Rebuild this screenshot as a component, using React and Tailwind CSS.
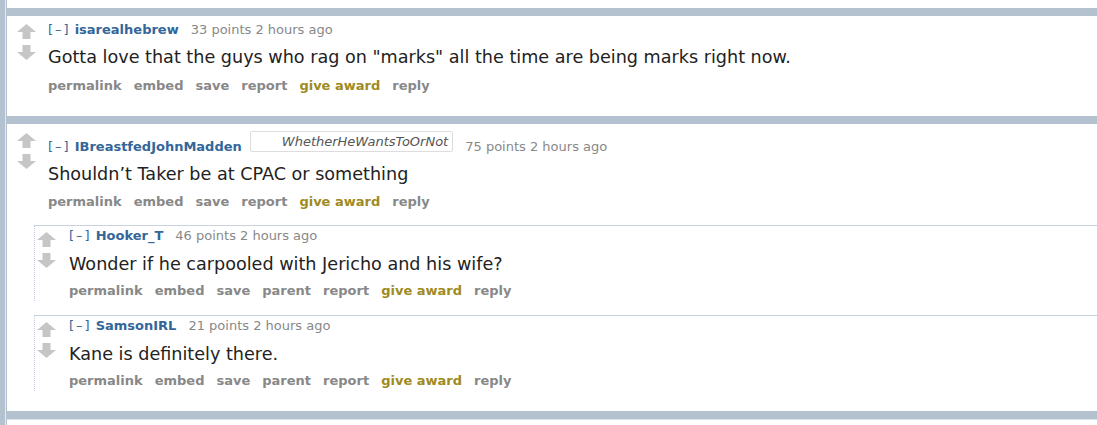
import React from 'react';

const font = { fontFamily: '"DejaVu Sans", Verdana, sans-serif' };

const UpArrow = () => (
  <svg width="19" height="15" viewBox="0 0 19 15">
    <path d="M9.5 0 L19 8 H13.5 V15 H5.5 V8 H0 Z" fill="#c6c6c6" />
  </svg>
);

const DownArrow = () => (
  <svg width="19" height="15" viewBox="0 0 19 15">
    <path d="M9.5 15 L19 7 H13.5 V0 H5.5 V7 H0 Z" fill="#c6c6c6" />
  </svg>
);

const Tagline = ({ author, points, flair }) => (
  <div className="flex items-start text-[13px] leading-[16px] whitespace-nowrap">
    <span className={`text-[#369] tracking-[2px] ${flair ? 'mt-[8px]' : ''}`}>[–]</span>
    <span className={`ml-[4px] font-bold text-[#369] ${flair ? 'mt-[8px]' : ''}`}>{author}</span>
    {flair && (
      <span className="ml-[8px] h-[21px] border border-[#dddddd] rounded-[2px] pl-[31px] pr-[4px] italic text-[#555] leading-[19px]">
        {flair}
      </span>
    )}
    <span className={`ml-[12px] text-[#888] ${flair ? 'mt-[8px]' : ''}`}>{points} points 2 hours ago</span>
  </div>
);

const Buttons = ({ parent }) => {
  const items = parent
    ? ['permalink', 'embed', 'save', 'parent', 'report', 'give award', 'reply']
    : ['permalink', 'embed', 'save', 'report', 'give award', 'reply'];
  return (
    <div className="flex gap-[12px] text-[13px] leading-[16px] font-bold whitespace-nowrap">
      {items.map((b) => (
        <span key={b} className={b === 'give award' ? 'text-[#a08a22]' : 'text-[#888]'}>{b}</span>
      ))}
    </div>
  );
};

const ChildComment = ({ author, points, body, className = '' }) => (
  <div className={`flex border-t border-t-[#c9d2dd] border-l border-l-[#c3cbe3] border-dotted ${className}`} style={{ borderTopStyle: 'solid' }}>
    <div className="w-[34px] shrink-0 pl-[2px] pt-[6px] flex flex-col gap-[6px]">
      <UpArrow />
      <DownArrow />
    </div>
    <div className="pt-[2px] pb-[2px]">
      <Tagline author={author} points={points} />
      <p className="mt-[10px] text-[17.6px] leading-[20px] text-[#222]">{body}</p>
      <div className="mt-[9px]">
        <Buttons parent />
      </div>
    </div>
  </div>
);

export default function App() {
  return (
    <div className="min-h-screen bg-[#b4c1cf] overflow-hidden" style={font}>
      <div className="ml-[5px] border-l border-[#e4e9ef] pl-[1px] flex flex-col gap-[8px]">
        <div className="h-[8px] bg-white" />

        {/* first comment */}
        <div className="bg-white flex">
          <div className="w-[41px] shrink-0 pl-[10px] pt-[8px] flex flex-col gap-[6px]">
            <UpArrow />
            <DownArrow />
          </div>
          <div className="pt-[6px] pb-[22px]">
            <Tagline author="isarealhebrew" points="33" />
            <p className="mt-[9px] text-[17.6px] leading-[20px] text-[#222]">
              Gotta love that the guys who rag on "marks" all the time are being marks right now.
            </p>
            <div className="mt-[11px]">
              <Buttons />
            </div>
          </div>
        </div>

        {/* second comment with replies */}
        <div className="bg-white pb-[20px]">
          <div className="flex">
            <div className="w-[41px] shrink-0 pl-[10px] pt-[9px] flex flex-col gap-[6px]">
              <UpArrow />
              <DownArrow />
            </div>
            <div className="pt-[7px]">
              <Tagline author="IBreastfedJohnMadden" points="75" flair="WhetherHeWantsToOrNot" />
              <p className="mt-[9px] text-[17.6px] leading-[20px] text-[#222]">Shouldn’t Taker be at CPAC or something</p>
              <div className="mt-[10px]">
                <Buttons />
              </div>
            </div>
          </div>
          <div className="ml-[27px] mt-[15px]">
            <ChildComment author="Hooker_T" points="46" body="Wonder if he carpooled with Jericho and his wife?" />
            <ChildComment className="mt-[14px]" author="SamsonIRL" points="21" body="Kane is definitely there." />
          </div>
        </div>

        <div className="h-[20px] bg-white border-t border-[#dce3ea]" />
      </div>
    </div>
  );
}
